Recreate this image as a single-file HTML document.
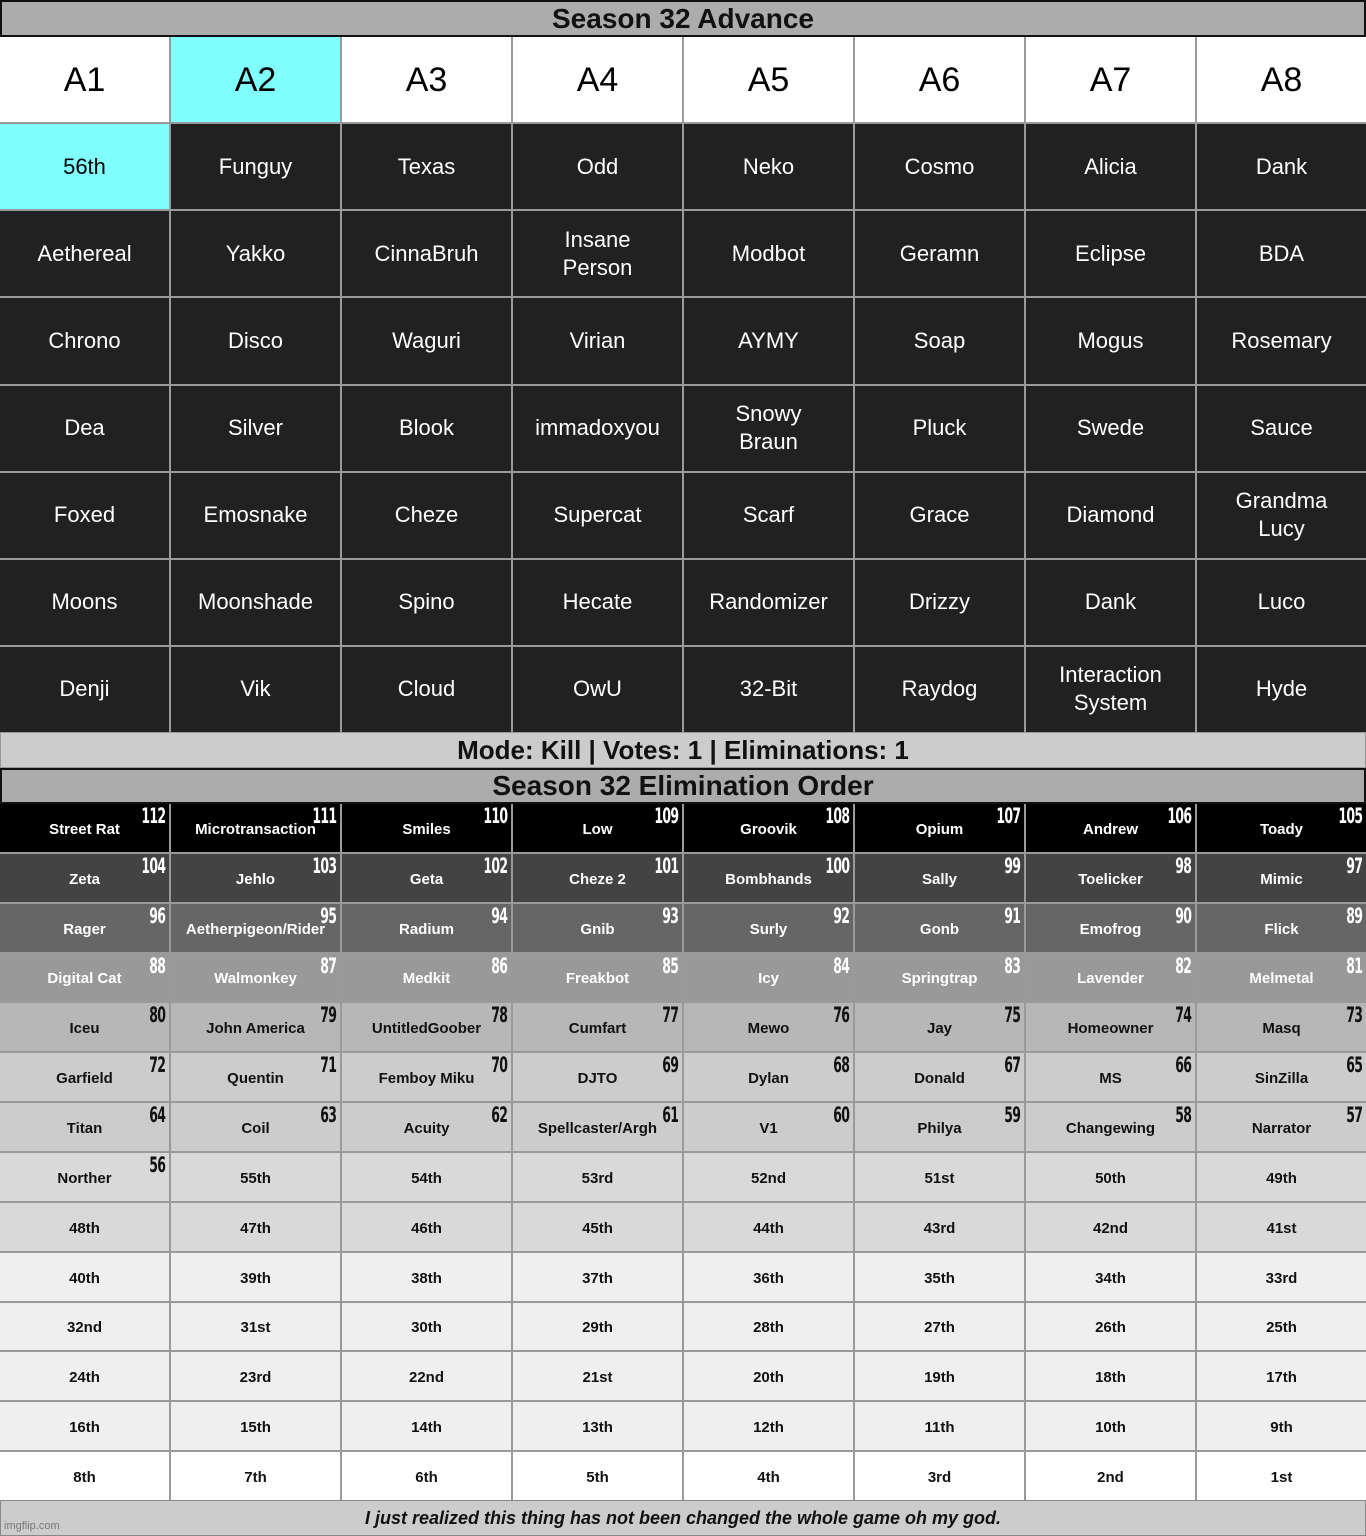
<!DOCTYPE html>
<html><head><meta charset="utf-8"><style>
*{box-sizing:border-box;margin:0;padding:0}
body{width:1366px;height:1536px;background:#999;font-family:"Liberation Sans",sans-serif;position:relative;overflow:hidden}
.bar{position:absolute;left:0;width:1366px;display:flex;align-items:center;justify-content:center;font-weight:bold;color:#111}
.t1{top:0;height:37px;background:#acacac;border:2px solid #111;font-size:28px}
.mode{top:732px;height:36px;background:#cccccc;font-size:26px;border:1px solid #999}
.t2{top:768px;height:36px;background:#acacac;border:2px solid #111;font-size:28px}
.foot{top:1500px;height:36px;background:#cccccc;font-size:18px;font-style:italic;border:1px solid #888}
.wm{position:absolute;left:4px;top:1520px;font-size:11px;color:#777}
.g1{position:absolute;left:0;top:37px;width:1366px;height:695px;display:grid;grid-template-columns:repeat(8,1fr);grid-template-rows:repeat(8,1fr);gap:2px;background:#9a9a9a}
.g1 div{display:flex;align-items:center;justify-content:center;text-align:center;background:#212121;color:#fff;font-size:22px;line-height:28px}
.g1 .h{background:#fff;color:#000;font-size:34px}
.g1 .c{background:#80ffff;color:#000}
.g2{position:absolute;left:0;top:804px;width:1366px;height:696px;display:grid;grid-template-columns:repeat(8,1fr);grid-template-rows:repeat(14,1fr);gap:2px;background:#9a9a9a}
.g2 div{position:relative;display:flex;align-items:center;justify-content:center;font-size:15px;font-weight:bold;padding-top:3px}
.g2 b{position:absolute;right:4px;top:1px;font-family:"DejaVu Sans Condensed","DejaVu Sans",sans-serif;font-weight:bold;font-size:21px;transform:scaleX(.66);transform-origin:right top;letter-spacing:-1px;line-height:22px}
.r1{background:#000;color:#fff}.r2{background:#434343;color:#fff}.r3{background:#666;color:#fff}.r4{background:#999;color:#fff}
.r5{background:#b7b7b7;color:#111}.r6{background:#ccc;color:#111}.r8{background:#d9d9d9;color:#111}.r10{background:#efefef;color:#111}.r14{background:#fff;color:#111}
</style></head><body>
<div class="bar t1">Season 32 Advance</div>
<div class="g1">
<div class="h">A1</div><div class="h c">A2</div><div class="h">A3</div><div class="h">A4</div><div class="h">A5</div><div class="h">A6</div><div class="h">A7</div><div class="h">A8</div>
<div class="c">56th</div><div>Funguy</div><div>Texas</div><div>Odd</div><div>Neko</div><div>Cosmo</div><div>Alicia</div><div>Dank</div>
<div>Aethereal</div><div>Yakko</div><div>CinnaBruh</div><div>Insane<br>Person</div><div>Modbot</div><div>Geramn</div><div>Eclipse</div><div>BDA</div>
<div>Chrono</div><div>Disco</div><div>Waguri</div><div>Virian</div><div>AYMY</div><div>Soap</div><div>Mogus</div><div>Rosemary</div>
<div>Dea</div><div>Silver</div><div>Blook</div><div>immadoxyou</div><div>Snowy<br>Braun</div><div>Pluck</div><div>Swede</div><div>Sauce</div>
<div>Foxed</div><div>Emosnake</div><div>Cheze</div><div>Supercat</div><div>Scarf</div><div>Grace</div><div>Diamond</div><div>Grandma<br>Lucy</div>
<div>Moons</div><div>Moonshade</div><div>Spino</div><div>Hecate</div><div>Randomizer</div><div>Drizzy</div><div>Dank</div><div>Luco</div>
<div>Denji</div><div>Vik</div><div>Cloud</div><div>OwU</div><div>32-Bit</div><div>Raydog</div><div>Interaction<br>System</div><div>Hyde</div>
</div>
<div class="bar mode">Mode: Kill | Votes: 1 | Eliminations: 1</div>
<div class="bar t2">Season 32 Elimination Order</div>
<div class="g2">
<div class="r1">Street Rat<b>112</b></div><div class="r1">Microtransaction<b>111</b></div><div class="r1">Smiles<b>110</b></div><div class="r1">Low<b>109</b></div><div class="r1">Groovik<b>108</b></div><div class="r1">Opium<b>107</b></div><div class="r1">Andrew<b>106</b></div><div class="r1">Toady<b>105</b></div>
<div class="r2">Zeta<b>104</b></div><div class="r2">Jehlo<b>103</b></div><div class="r2">Geta<b>102</b></div><div class="r2">Cheze 2<b>101</b></div><div class="r2">Bombhands<b>100</b></div><div class="r2">Sally<b>99</b></div><div class="r2">Toelicker<b>98</b></div><div class="r2">Mimic<b>97</b></div>
<div class="r3">Rager<b>96</b></div><div class="r3">Aetherpigeon/Rider<b>95</b></div><div class="r3">Radium<b>94</b></div><div class="r3">Gnib<b>93</b></div><div class="r3">Surly<b>92</b></div><div class="r3">Gonb<b>91</b></div><div class="r3">Emofrog<b>90</b></div><div class="r3">Flick<b>89</b></div>
<div class="r4">Digital Cat<b>88</b></div><div class="r4">Walmonkey<b>87</b></div><div class="r4">Medkit<b>86</b></div><div class="r4">Freakbot<b>85</b></div><div class="r4">Icy<b>84</b></div><div class="r4">Springtrap<b>83</b></div><div class="r4">Lavender<b>82</b></div><div class="r4">Melmetal<b>81</b></div>
<div class="r5">Iceu<b>80</b></div><div class="r5">John America<b>79</b></div><div class="r5">UntitledGoober<b>78</b></div><div class="r5">Cumfart<b>77</b></div><div class="r5">Mewo<b>76</b></div><div class="r5">Jay<b>75</b></div><div class="r5">Homeowner<b>74</b></div><div class="r5">Masq<b>73</b></div>
<div class="r6">Garfield<b>72</b></div><div class="r6">Quentin<b>71</b></div><div class="r6">Femboy Miku<b>70</b></div><div class="r6">DJTO<b>69</b></div><div class="r6">Dylan<b>68</b></div><div class="r6">Donald<b>67</b></div><div class="r6">MS<b>66</b></div><div class="r6">SinZilla<b>65</b></div>
<div class="r6">Titan<b>64</b></div><div class="r6">Coil<b>63</b></div><div class="r6">Acuity<b>62</b></div><div class="r6">Spellcaster/Argh<b>61</b></div><div class="r6">V1<b>60</b></div><div class="r6">Philya<b>59</b></div><div class="r6">Changewing<b>58</b></div><div class="r6">Narrator<b>57</b></div>
<div class="r8">Norther<b>56</b></div><div class="r8">55th</div><div class="r8">54th</div><div class="r8">53rd</div><div class="r8">52nd</div><div class="r8">51st</div><div class="r8">50th</div><div class="r8">49th</div>
<div class="r8">48th</div><div class="r8">47th</div><div class="r8">46th</div><div class="r8">45th</div><div class="r8">44th</div><div class="r8">43rd</div><div class="r8">42nd</div><div class="r8">41st</div>
<div class="r10">40th</div><div class="r10">39th</div><div class="r10">38th</div><div class="r10">37th</div><div class="r10">36th</div><div class="r10">35th</div><div class="r10">34th</div><div class="r10">33rd</div>
<div class="r10">32nd</div><div class="r10">31st</div><div class="r10">30th</div><div class="r10">29th</div><div class="r10">28th</div><div class="r10">27th</div><div class="r10">26th</div><div class="r10">25th</div>
<div class="r10">24th</div><div class="r10">23rd</div><div class="r10">22nd</div><div class="r10">21st</div><div class="r10">20th</div><div class="r10">19th</div><div class="r10">18th</div><div class="r10">17th</div>
<div class="r10">16th</div><div class="r10">15th</div><div class="r10">14th</div><div class="r10">13th</div><div class="r10">12th</div><div class="r10">11th</div><div class="r10">10th</div><div class="r10">9th</div>
<div class="r14">8th</div><div class="r14">7th</div><div class="r14">6th</div><div class="r14">5th</div><div class="r14">4th</div><div class="r14">3rd</div><div class="r14">2nd</div><div class="r14">1st</div>
</div>
<div class="bar foot">I just realized this thing has not been changed the whole game oh my god.</div>
<div class="wm">imgflip.com</div>
</body></html>
